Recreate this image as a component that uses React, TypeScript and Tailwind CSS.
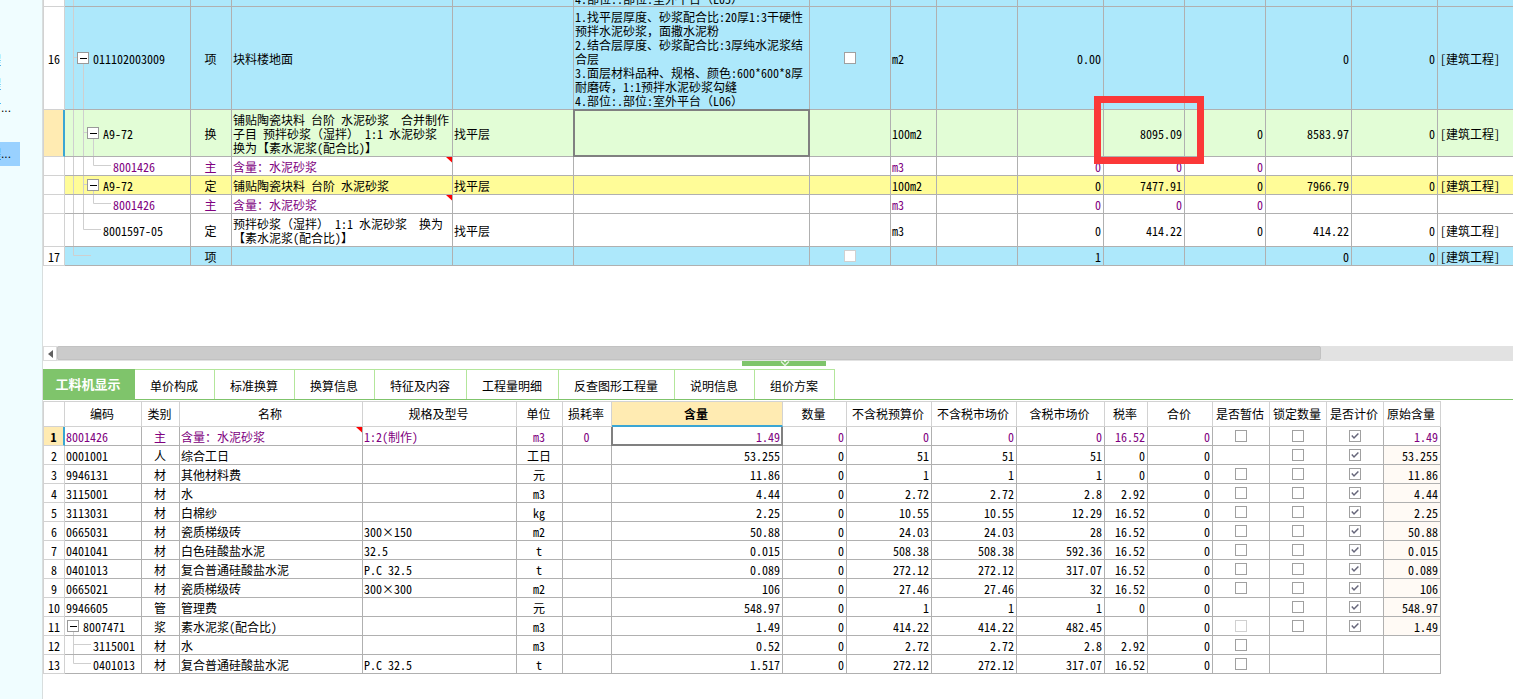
import type { ReactNode } from "react";
import clsx from "clsx";

const LINE = "border-[#b0b0b0]";
const SOFT = "border-[#d2d2d2]";

function Toggle({ label }: { label: string }) {
  return (
    <button
      type="button"
      aria-label={`折叠 ${label}`}
      className="relative flex size-3 shrink-0 items-center justify-center border border-[#999999] bg-white"
    >
      <span className="h-px w-[7px] bg-black" />
    </button>
  );
}

function Check({ checked, faded, label }: { checked?: boolean; faded?: boolean; label: string }) {
  return (
    <span className="relative mx-auto block size-3">
      <input
        type="checkbox"
        aria-label={label}
        defaultChecked={checked}
        disabled={faded}
        className={clsx(
          "block size-3 appearance-none border bg-white",
          faded ? "border-[#d0d0d0]" : "border-[#a0a0a0]",
        )}
      />
      {checked && (
        <svg className="pointer-events-none absolute inset-0" width="12" height="12" viewBox="0 0 12 12" fill="none">
          <path d="M2.8 5.6 5 7.9 9.4 3.4" stroke="#66667a" strokeWidth="1.5" />
        </svg>
      )}
    </span>
  );
}

function Corner() {
  return (
    <svg className="absolute top-0 right-0" width="6" height="6" viewBox="0 0 6 6">
      <path d="M0 0H6V5.5Z" fill="#ff0000" />
    </svg>
  );
}

function Tree({ d }: { d: string }) {
  return (
    <svg className="pointer-events-none absolute top-0 left-0 h-full w-full" fill="none">
      <path d={d} stroke="#cfcfcf" strokeWidth="1" />
    </svg>
  );
}

type TopRow = {
  no?: string;
  height: string;
  bg?: string;
  purple?: boolean;
  current?: boolean;
  tree: string;
  indent: string;
  toggle?: boolean;
  code: string;
  kind: string;
  name: string;
  note?: boolean;
  spec?: string;
  feature?: string;
  clipped?: boolean;
  check?: "on" | "faded";
  unit?: string;
  values: [string, string, string, string, string];
  category?: string;
};

const topRows: TopRow[] = [
  {
    height: "h-[7px]", bg: "bg-[#ade8fb]", tree: "M8.5 0V7", indent: "pl-3", code: "", kind: "", name: "",
    feature: "4.部位:.部位:室外平台（L05）", clipped: true, values: ["", "", "", "", ""],
  },
  {
    no: "16", height: "h-[103px]", bg: "bg-[#ade8fb]", tree: "M8.5 0V103M8.5 50.5H12M18.5 57V103", indent: "pl-3", toggle: true,
    code: "011102003009", kind: "项", name: "块料楼地面",
    feature:
      "1.找平层厚度、砂浆配合比:20厚1:3干硬性\n预拌水泥砂浆，面撒水泥粉\n2.结合层厚度、砂浆配合比:3厚纯水泥浆结\n合层\n3.面层材料品种、规格、颜色:600*600*8厚\n耐磨砖，1:1预拌水泥砂浆勾缝\n4.部位:.部位:室外平台（L06）",
    check: "on", unit: "m2", values: ["0.00", "", "", "0", "0"], category: "[建筑工程]",
  },
  {
    height: "h-[47px]", bg: "bg-[#e2fdd6]", current: true, tree: "M8.5 0V47M18.5 0V47M18.5 22.5H22M28.5 29V47", indent: "pl-[22px]", toggle: true,
    code: "A9-72", kind: "换",
    name: "铺贴陶瓷块料 台阶 水泥砂浆  合并制作\n子目 预拌砂浆（湿拌） 1:1 水泥砂浆\n换为【素水泥浆(配合比)】",
    spec: "找平层", unit: "100m2", values: ["", "8095.09", "0", "8583.97", "0"], category: "[建筑工程]",
  },
  {
    height: "h-[19px]", purple: true, tree: "M8.5 0V19M18.5 0V19M28.5 0V8.5H46", indent: "pl-12", code: "8001426", kind: "主",
    name: "含量：水泥砂浆", note: true, unit: "m3", values: ["0", "0", "0", "", ""],
  },
  {
    height: "h-[19px]", bg: "bg-[#fffc98]", tree: "M8.5 0V19M18.5 0V19M18.5 8.5H22M28.5 15V19", indent: "pl-[22px]", toggle: true,
    code: "A9-72", kind: "定", name: "铺贴陶瓷块料 台阶 水泥砂浆", spec: "找平层", unit: "100m2",
    values: ["0", "7477.91", "0", "7966.79", "0"], category: "[建筑工程]",
  },
  {
    height: "h-[19px]", purple: true, tree: "M8.5 0V19M18.5 0V19M28.5 0V8.5H46", indent: "pl-12", code: "8001426", kind: "主",
    name: "含量：水泥砂浆", note: true, unit: "m3", values: ["0", "0", "0", "", ""],
  },
  {
    height: "h-[33px]", tree: "M8.5 0V33M18.5 0V15.5H36", indent: "pl-[38px]", code: "8001597-05", kind: "定",
    name: "预拌砂浆（湿拌） 1:1 水泥砂浆  换为\n【素水泥浆(配合比)】", spec: "找平层", unit: "m3",
    values: ["0", "414.22", "0", "414.22", "0"], category: "[建筑工程]",
  },
  {
    no: "17", height: "h-[19px]", bg: "bg-[#ade8fb]", tree: "M8.5 0V8.5H26", indent: "pl-3", code: "", kind: "项", name: "",
    check: "faded", values: ["1", "", "", "0", "0"], category: "[建筑工程]",
  },
];

function Cell({ className, flush, children }: { className?: string; flush?: boolean; children?: ReactNode }) {
  return (
    <td className={clsx("border-r border-b pr-0.5 pb-0", flush ? "pt-0 pl-px" : "pt-0.5 pl-px", LINE, className)}>
      {children}
    </td>
  );
}

function BillTable() {
  return (
    <table className="w-full table-fixed border-separate border-spacing-0 text-left whitespace-pre">
      <colgroup>
        <col className="w-[22px]" />
        <col className="w-[126px]" />
        <col className="w-[41px]" />
        <col className="w-[221px]" />
        <col className="w-[121px]" />
        <col className="w-[236px]" />
        <col className="w-[81px]" />
        <col className="w-[46px]" />
        <col className="w-[81px]" />
        <col className="w-[86px]" />
        <col className="w-[81px]" />
        <col className="w-[81px]" />
        <col className="w-[86px]" />
        <col className="w-[86px]" />
        <col />
      </colgroup>
      <tbody>
        {topRows.map((r, i) => (
          <tr key={i} className={clsx(r.bg, r.purple && "text-[#800080]")}>
            <td
              className={clsx(
                "border-b border-l px-0 pt-0.5 pb-0 text-center",
                r.height,
                SOFT,
                r.current ? "border-r-2 border-r-[#3aa6d4] bg-[#ffebb2]" : "border-r bg-white",
              )}
            >
              {r.no}
            </td>
            <td className={clsx("relative border-r border-b p-0", LINE)}>
              <Tree d={r.tree} />
              <div className={clsx("flex items-center gap-1", r.indent)}>
                {r.toggle && <Toggle label={r.code} />}
                {r.code && <span className="pt-0.5">{r.code}</span>}
              </div>
            </td>
            <Cell flush={r.clipped} className="text-center">{r.kind}</Cell>
            <Cell flush={r.clipped} className="relative">
              {r.name}
              {r.note && <Corner />}
            </Cell>
            <Cell flush={r.clipped}>{r.spec}</Cell>
            <Cell flush={r.clipped} className="relative">
              {r.clipped ? <div className="flex h-1.5 items-end overflow-hidden">{r.feature}</div> : r.feature}
              {r.current && <span className="absolute -inset-px border-2 border-[#808080]" />}
            </Cell>
            <Cell flush>{r.check && <Check label="主要清单" faded={r.check === "faded"} />}</Cell>
            <Cell>{r.unit}</Cell>
            <Cell />
            <Cell className="text-right">{r.values[0]}</Cell>
            <Cell className="relative text-right">
              {r.values[1]}
              {r.current && (
                <span className="absolute -top-3.5 -right-5 -bottom-2 -left-2.5 z-10 border-[7px] border-[#fb3838]" />
              )}
            </Cell>
            <Cell className="text-right">{r.values[2]}</Cell>
            <Cell className="text-right">{r.values[3]}</Cell>
            <Cell className="text-right">{r.values[4]}</Cell>
            <td className={clsx("border-b pt-0.5 pr-0 pb-0 pl-0.5", LINE)}>{r.category}</td>
          </tr>
        ))}
      </tbody>
    </table>
  );
}

const tabs = ["工料机显示", "单价构成", "标准换算", "换算信息", "特征及内容", "工程量明细", "反查图形工程量", "说明信息", "组价方案"];

function TabBar() {
  return (
    <div role="tablist" className="flex border-b border-[#7fc46b]">
      {tabs.map((t, i) =>
        i === 0 ? (
          <button key={t} type="button" role="tab" aria-selected="true" className="h-[30px] w-[92px] bg-[#7fc46b] pr-0.5 text-[13px] font-bold text-white">
            {t}
          </button>
        ) : (
          <button key={t} type="button" role="tab" aria-selected="false" className="h-[30px] border-t border-r border-[#b3e69b] bg-white pt-0.5 pr-4 pl-[15px]">
            {t}
          </button>
        ),
      )}
    </div>
  );
}

const heads = [
  "编码", "类别", "名称", "规格及型号", "单位", "损耗率", "含量", "数量", "不含税预算价", "不含税市场价", "含税市场价",
  "税率", "合价", "是否暂估", "锁定数量", "是否计价", "原始含量",
];

type Mark = "" | "0" | "1" | "x";
type Res = [string, string, string, string, string, string, string, string, string, string, string, string, Mark, Mark, Mark, string];

/* code, kind, name, spec, unit, loss, content, qty, budget, market, taxed, rate, flags (x = disabled), original */
const resources: Res[] = [
  ["8001426", "主", "含量：水泥砂浆", "1:2(制作)", "m3", "0", "1.49", "0", "0", "0", "0", "16.52", "0", "0", "1", "1.49"],
  ["0001001", "人", "综合工日", "", "工日", "", "53.255", "0", "51", "51", "51", "0", "", "0", "1", "53.255"],
  ["9946131", "材", "其他材料费", "", "元", "", "11.86", "0", "1", "1", "1", "0", "0", "0", "1", "11.86"],
  ["3115001", "材", "水", "", "m3", "", "4.44", "0", "2.72", "2.72", "2.8", "2.92", "0", "0", "1", "4.44"],
  ["3113031", "材", "白棉纱", "", "kg", "", "2.25", "0", "10.55", "10.55", "12.29", "16.52", "0", "0", "1", "2.25"],
  ["0665031", "材", "瓷质梯级砖", "300×150", "m2", "", "50.88", "0", "24.03", "24.03", "28", "16.52", "0", "0", "1", "50.88"],
  ["0401041", "材", "白色硅酸盐水泥", "32.5", "t", "", "0.015", "0", "508.38", "508.38", "592.36", "16.52", "0", "0", "1", "0.015"],
  ["0401013", "材", "复合普通硅酸盐水泥", "P.C 32.5", "t", "", "0.089", "0", "272.12", "272.12", "317.07", "16.52", "0", "0", "1", "0.089"],
  ["0665021", "材", "瓷质梯级砖", "300×300", "m2", "", "106", "0", "27.46", "27.46", "32", "16.52", "0", "0", "1", "106"],
  ["9946605", "管", "管理费", "", "元", "", "548.97", "0", "1", "1", "1", "0", "", "0", "1", "548.97"],
  ["8007471", "浆", "素水泥浆(配合比)", "", "m3", "", "1.49", "0", "414.22", "414.22", "482.45", "", "x", "0", "1", "1.49"],
  ["3115001", "材", "水", "", "m3", "", "0.52", "0", "2.72", "2.72", "2.8", "2.92", "0", "", "", ""],
  ["0401013", "材", "复合普通硅酸盐水泥", "P.C 32.5", "t", "", "1.517", "0", "272.12", "272.12", "317.07", "16.52", "0", "", "", ""],
];

const branches: Record<number, string> = {
  10: "M8.5 14V19",
  11: "M8.5 0V19M8.5 8.5H26",
  12: "M8.5 0V8.5H26",
};

function ResourceTable() {
  return (
    <table className="mt-px w-[1398px] table-fixed border-separate border-spacing-0 text-left whitespace-pre">
      <colgroup>
        <col className="w-[22px]" />
        <col className="w-[77px]" />
        <col className="w-[38px]" />
        <col className="w-[183px]" />
        <col className="w-[154px]" />
        <col className="w-[46px]" />
        <col className="w-[49px]" />
        <col className="w-[171px]" />
        <col className="w-[64px]" />
        <col className="w-[85px]" />
        <col className="w-[85px]" />
        <col className="w-[88px]" />
        <col className="w-[43px]" />
        <col className="w-[65px]" />
        <col className="w-[57px]" />
        <col className="w-[57px]" />
        <col className="w-[57px]" />
        <col className="w-[57px]" />
      </colgroup>
      <thead>
        <tr>
          <th className={clsx("h-[26px] border p-0", SOFT)} />
          {heads.map((h) => (
            <th
              key={h}
              scope="col"
              className={clsx(
                "border-t border-r py-0 pr-0.5 pl-0 text-center",
                SOFT,
                h === "含量" ? "border-b-2 border-b-[#3aa6d4] bg-[#ffebb2] font-bold" : "border-b font-normal",
              )}
            >
              {h}
            </th>
          ))}
        </tr>
      </thead>
      <tbody>
        {resources.map((r, i) => (
          <tr key={i} className={clsx(i === 0 && "text-[#800080]")}>
            <th
              scope="row"
              className={clsx(
                "h-[19px] border-b border-l px-0 pt-0.5 pb-0 text-center",
                SOFT,
                i === 0 ? "border-r-2 border-r-[#3aa6d4] bg-[#ffebb2] font-bold text-black" : "border-r font-normal",
              )}
            >
              {i + 1}
            </th>
            <td className={clsx("relative border-r border-b p-0", LINE)}>
              {branches[i] && <Tree d={branches[i]} />}
              <div className={clsx("flex items-center gap-1", i < 10 && "pl-px", i === 10 && "pl-0.5", i > 10 && "pl-7")}>
                {i === 10 && <Toggle label={r[0]} />}
                <span className="pt-0.5">{r[0]}</span>
              </div>
            </td>
            <Cell className="text-center">{r[1]}</Cell>
            <Cell className="relative">
              {r[2]}
              {i === 0 && <Corner />}
            </Cell>
            <Cell>{r[3]}</Cell>
            <Cell className="text-center">{r[4]}</Cell>
            <Cell className="text-center">{r[5]}</Cell>
            <Cell className="relative text-right">
              {r[6]}
              {i === 0 && <span className="absolute top-0 -right-px -bottom-px -left-px border-2 border-t-0 border-[#808080]" />}
            </Cell>
            {r.slice(7, 12).map((v, k) => (
              <Cell key={k} className="text-right">
                {v}
              </Cell>
            ))}
            <Cell className="text-right">0</Cell>
            {r.slice(12, 15).map((v, k) => (
              <Cell key={k} flush>
                {v && <Check label={`${heads[13 + k]} ${r[2]}`} checked={v === "1"} faded={v === "x"} />}
              </Cell>
            ))}
            <Cell className={clsx("text-right", i > 0 && i < 11 && "bg-[#fffaf5]")}>{r[15]}</Cell>
          </tr>
        ))}
      </tbody>
    </table>
  );
}

function Scrollbar() {
  return (
    <div className="flex h-[15px] bg-[#e2e2e2]">
      <button
        type="button"
        aria-label="向左滚动"
        className="flex w-3.5 items-center justify-center border border-[#dcdcdc] bg-white"
      >
        <svg width="5" height="8" viewBox="0 0 5 8">
          <path d="M5 0V8L0 4Z" fill="#606060" />
        </svg>
      </button>
      <div className="mb-px w-[86%] rounded-xs border border-[#c2c2c2] bg-[#cbcbcb]" />
    </div>
  );
}

function NavItem({ text, dots, selected }: { text: string; dots?: boolean; selected?: boolean }) {
  return (
    <li className={clsx("flex h-6 w-5 items-center overflow-hidden", selected && "bg-[#99d1ff]")}>
      <span className="flex w-px shrink-0 justify-end overflow-hidden text-[#0050a0]">{text}</span>
      {dots && <span className="font-['Liberation_Sans',sans-serif] text-black">...</span>}
    </li>
  );
}

export default function App() {
  return (
    <div className="flex h-screen overflow-hidden bg-white font-['Noto_Sans_Mono_CJK_SC','Noto_Sans_CJK_SC',monospace] text-[12px] leading-[14px] text-black">
      <aside className="w-[43px] shrink-0 border-r border-[#d8dede] bg-[#f0fdff] pt-12">
        <ul>
          <NavItem text="程" />
          <NavItem text="程" />
          <NavItem text="下" dots />
          <li className="h-[22px]" />
          <NavItem text="程" dots selected />
        </ul>
      </aside>
      <main className="flex min-w-0 flex-1 flex-col">
        <section className="h-[346px] shrink-0 overflow-hidden">
          <BillTable />
        </section>
        <Scrollbar />
        <div className="flex h-2 justify-center pl-3">
          <button type="button" aria-label="收起面板" className="relative h-[5px] w-21 bg-[#7fc46b]">
            <svg className="absolute -top-px left-[38px]" width="10" height="7" viewBox="0 0 10 7" fill="none">
              <path d="M3 0H7L5 2.5Z" fill="#ffffff" />
              <path d="M1 1.5 5 5.5 9 1.5" stroke="#ffffff" strokeWidth="1.3" strokeOpacity="0.8" />
            </svg>
          </button>
        </div>
        <TabBar />
        <ResourceTable />
      </main>
    </div>
  );
}
